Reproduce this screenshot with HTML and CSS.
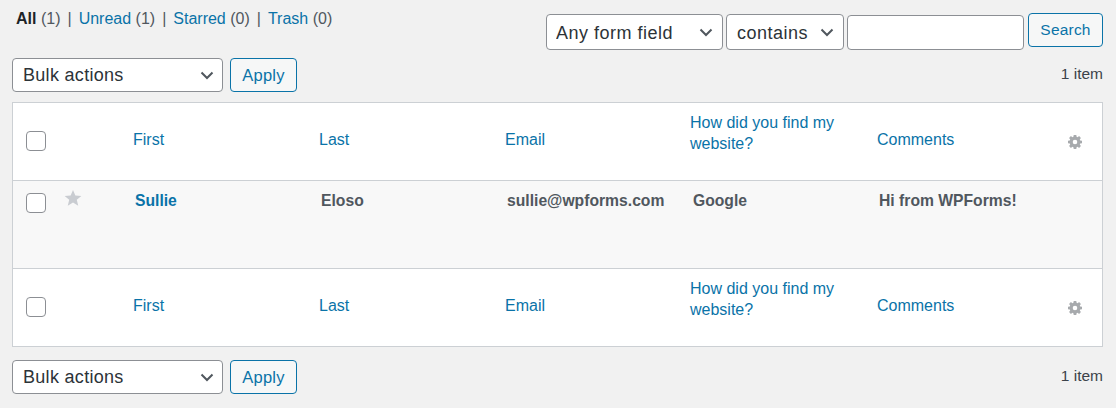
FILE: index.html
```html
<!DOCTYPE html>
<html lang="en">
<head>
<meta charset="utf-8">
<title>Entries</title>
<link rel="stylesheet" href="styles.css">
</head>
<body>
<div class="page">
  <div class="top">
    <ul class="views">
      <li><strong>All</strong> <span class="count">(1)</span></li>
      <li class="sep">|</li>
      <li><a href="#">Unread</a> <span class="count">(1)</span></li>
      <li class="sep">|</li>
      <li><a href="#">Starred</a> <span class="count">(0)</span></li>
      <li class="sep">|</li>
      <li><a href="#">Trash</a> <span class="count">(0)</span></li>
    </ul>
    <form class="search">
      <select class="select field-select"><option>Any form field</option></select>
      <select class="select op-select"><option>contains</option></select>
      <input class="search-input" type="text">
      <button class="btn search-btn" type="button">Search</button>
    </form>
  </div>
  <div class="tablenav">
    <select class="select bulk-select"><option>Bulk actions</option></select>
    <button class="btn apply-btn" type="button">Apply</button>
    <span class="num">1 item</span>
  </div>
  <div class="table">
    <div class="row head">
      <div class="cell-check"><input class="check" type="checkbox"></div>
      <a href="#" class="col">First</a>
      <a href="#" class="col">Last</a>
      <a href="#" class="col">Email</a>
      <a href="#" class="long">How did you find my website?</a>
      <a href="#" class="col">Comments</a>
      <div class="cell-gear">
        <svg class="gear" viewBox="0 0 14 14"><path fill-rule="evenodd" d="M5.700 0h2.600l.3 1.800 1 .4 1.500-1.100 1.800 1.800-1.100 1.500.4 1 1.800.3v2.600l-1.800.3-.4 1 1.100 1.500-1.800 1.800-1.500-1.100-1 .4-.3 1.800H5.700l-.3-1.800-1-.4-1.500 1.100-1.800-1.800 1.100-1.500-.4-1L0 8.300V5.700l1.800-.3.4-1-1.100-1.500 1.800-1.800 1.500 1.100 1-.4zM7 4.700a2.300 2.300 0 1 0 0 4.600 2.300 2.300 0 0 0 0-4.600z"/></svg>
      </div>
    </div>
    <div class="row entry">
      <div class="cell-check entry-check">
        <input class="check" type="checkbox">
        <svg class="star" viewBox="0 0 20 20"><polygon points="10,1 12.600,7.200 19.300,7.700 14.200,12 15.800,18.600 10,15.100 4.200,18.600 5.800,12 0.700,7.700 7.400,7.200"/></svg>
      </div>
      <a href="#" class="val">Sullie</a>
      <span class="val">Eloso</span>
      <span class="val">sullie@wpforms.com</span>
      <span class="val">Google</span>
      <span class="val">Hi from WPForms!</span>
    </div>
    <div class="row head">
      <div class="cell-check"><input class="check" type="checkbox"></div>
      <a href="#" class="col">First</a>
      <a href="#" class="col">Last</a>
      <a href="#" class="col">Email</a>
      <a href="#" class="long">How did you find my website?</a>
      <a href="#" class="col">Comments</a>
      <div class="cell-gear">
        <svg class="gear" viewBox="0 0 14 14"><path fill-rule="evenodd" d="M5.700 0h2.600l.3 1.800 1 .4 1.500-1.100 1.800 1.800-1.100 1.500.4 1 1.800.3v2.600l-1.800.3-.4 1 1.100 1.500-1.800 1.800-1.500-1.100-1 .4-.3 1.800H5.700l-.3-1.800-1-.4-1.500 1.100-1.800-1.800 1.100-1.500-.4-1L0 8.300V5.700l1.800-.3.4-1-1.100-1.500 1.800-1.800 1.500 1.100 1-.4zM7 4.700a2.300 2.300 0 1 0 0 4.600 2.300 2.300 0 0 0 0-4.600z"/></svg>
      </div>
    </div>
  </div>
  <div class="tablenav bottom">
    <select class="select bulk-select"><option>Bulk actions</option></select>
    <button class="btn apply-btn" type="button">Apply</button>
    <span class="num">1 item</span>
  </div>
</div>
</body>
</html>
```
FILE: styles.css
```css
* { box-sizing: border-box; }
html, body { margin: 0; padding: 0; }
body {
  width: 1116px;
  height: 408px;
  overflow: hidden;
  background: #f1f1f1;
  color: #3c434a;
  font-family: "Liberation Sans", Arial, sans-serif;
  font-size: 16px;
}
a { color: #0a73a8; text-decoration: none; }
.page { padding: 0 13px 0 12px; }

.top {
  height: 58px;
  display: flex;
  justify-content: space-between;
  align-items: flex-start;
}
.views {
  list-style: none;
  margin: 0;
  padding: 9px 0 0 4px;
  display: flex;
  gap: 7px;
  line-height: 19px;
  font-size: 16px;
}
.views strong { color: #1d2327; }
.views .count, .views .sep { color: #50575e; }
.search {
  display: flex;
  align-items: flex-start;
  margin-top: 13px;
}
.select {
  appearance: none;
  -webkit-appearance: none;
  height: 36px;
  margin: 0;
  padding: 0 30px 0 10px;
  border: 1px solid #8c8f94;
  border-radius: 4px;
  color: #2c3338;
  font: 18px "Liberation Sans", Arial, sans-serif;
  letter-spacing: 0.5px;
  background: #fff url("data:image/svg+xml,%3Csvg xmlns='http://www.w3.org/2000/svg' width='14' height='9' viewBox='0 0 14 9'%3E%3Cpath d='M1.500 1.500 7 7l5.500-5.500' fill='none' stroke='%2350575e' stroke-width='2'/%3E%3C/svg%3E") no-repeat right 9px center;
}
.field-select { width: 177px; margin-top: 1px; padding: 2px 30px 0 9px; }
.op-select { width: 118px; margin: 1px 0 0 3px; padding-top: 2px; }
.search-input {
  width: 177px;
  height: 35px;
  margin: 2px 4px 0 3px;
  border: 1px solid #8c8f94;
  border-radius: 4px;
  background: #fff;
}
.btn {
  height: 34px;
  padding: 0;
  border: 1px solid #0a73a8;
  border-radius: 4px;
  background: #f6f7f7;
  color: #0a73a8;
  font: 16.5px "Liberation Sans", Arial, sans-serif;
  letter-spacing: 0.2px;
}
.search-btn { width: 75px; font-size: 15.5px; }

.tablenav {
  height: 44px;
  display: flex;
  align-items: flex-start;
}
.bulk-select {
  width: 211px;
  height: 34px;
  letter-spacing: 0.3px;
  padding-bottom: 1px;
  background-position: right 8px center;
}
.apply-btn { width: 67px; margin-left: 7px; }
.num {
  margin-left: auto;
  padding-top: 6px;
  line-height: 19px;
  font-size: 15.5px;
}

.table {
  height: 245px;
  border: 1px solid #ccd0d4;
  background: #fff;
}
.row {
  display: grid;
  grid-template-columns: 120px repeat(5, 186px) 1fr;
  font-size: 16px;
  line-height: 21px;
}
.head { height: 77px; align-items: center; }
.col { padding-bottom: 4px; }
.long { width: 165px; margin: 0 0 18px -1px; }
.entry {
  height: 89px;
  align-items: start;
  padding-top: 8px;
  font-size: 15.7px;
  background: #f8f8f8;
  border-top: 1px solid #ccd0d4;
  border-bottom: 1px solid #ccd0d4;
}
.cell-check { padding-left: 13px; display: flex; }
.head .cell-check { padding-bottom: 1px; }
.check {
  appearance: none;
  -webkit-appearance: none;
  width: 20px;
  height: 20px;
  margin: 0;
  border: 1px solid #8c8f94;
  border-radius: 4px;
  background: #fff;
}
.entry-check { padding-top: 4px; }
.star {
  width: 18px;
  height: 18px;
  margin: -4px 0 0 18px;
  fill: #c9ccd1;
}
.val {
  padding: 1px 0 0 2px;
  font-weight: 700;
  color: #50575e;
}
a.val { color: #0a73a8; }
.cell-gear { display: flex; justify-content: flex-end; padding-right: 20px; }
.gear { width: 14px; height: 14px; fill: #a7aaad; }
.bottom { margin-top: 13px; }
```
